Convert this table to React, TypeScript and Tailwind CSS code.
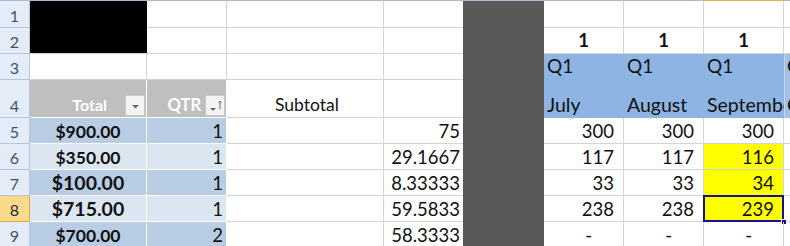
import React from 'react';

const font = { fontFamily: 'Lato, "Open Sans", sans-serif' };

function RowHead({ n, active, h }: { n: number; active?: boolean; h: string }) {
  return (
    <div
      className={`${h} w-[30px] shrink-0 flex items-end justify-center pb-[3px] border-r border-b text-[16px] ${
        active
          ? 'bg-[#f9d98c] border-[#e5a93a] text-[#2a2a2a]'
          : 'bg-[#e4ecf7] border-[#b3c6dd] text-[#3c5270]'
      }`}
    >
      {n}
    </div>
  );
}

function FilterButton({ sort }: { sort?: boolean }) {
  return (
    <div className="relative w-[20px] h-[21px] bg-[#f4f4f4] border border-[#c8c8c8] flex items-center justify-center">
      <svg width="18" height="19" viewBox="0 0 18 19">
        {sort ? (
          <>
            <path d="M4 12h6l-3 3z" fill="#6a6a6a" />
            <path d="M14 5v8M12.5 6.5L14 5l1.5 1.5" stroke="#6a6a6a" strokeWidth="1" fill="none" />
          </>
        ) : (
          <path d="M6 9h7l-3.5 3.5z" fill="#6a6a6a" />
        )}
      </svg>
    </div>
  );
}

const grid = 'border-r border-b border-[#d4d4d4]';

export default function App() {
  const rows = [
    { n: 5, total: '$900.00', big: false, band: 'bg-[#b8cce4]', qtr: '1', sub: '75', h: '300', i: '300', j: '300', jy: false },
    { n: 6, total: '$350.00', big: false, band: 'bg-[#dce6f1]', qtr: '1', sub: '29.1667', h: '117', i: '117', j: '116', jy: true },
    { n: 7, total: '$100.00', big: true, band: 'bg-[#b8cce4]', qtr: '1', sub: '8.33333', h: '33', i: '33', j: '34', jy: true },
    { n: 8, total: '$715.00', big: true, band: 'bg-[#dce6f1]', qtr: '1', sub: '59.5833', h: '238', i: '238', j: '239', jy: true },
    { n: 9, total: '$700.00', big: false, band: 'bg-[#b8cce4]', qtr: '2', sub: '58.3333', h: '-', i: '-', j: '-', jy: false },
  ];

  return (
    <div className="w-[790px] h-[246px] overflow-hidden bg-white text-[#111] text-[18.5px] leading-none" style={font}>
      {/* column header edge */}
      <div className="flex h-px">
        <div className="w-[703px] bg-[#a9bbd0]" />
        <div className="w-[81px] bg-[#e3b44c]" />
        <div className="flex-1 bg-[#a9bbd0]" />
      </div>

      {/* row 1 */}
      <div className="flex h-[27px]">
        <RowHead n={1} h="h-[27px]" />
        <div className="w-[117px] bg-black" />
        <div className={`w-[80px] ${grid}`} />
        <div className={`w-[157px] ${grid}`} />
        <div className="w-[79px] border-b border-[#d4d4d4]" />
        <div className="w-[81px] bg-[#595959]" />
        <div className={`w-[80px] ${grid}`} />
        <div className={`w-[80px] ${grid}`} />
        <div className={`w-[80px] ${grid}`} />
        <div className="flex-1 border-b border-[#d4d4d4]" />
      </div>

      {/* row 2 */}
      <div className="flex h-[26px]">
        <RowHead n={2} h="h-[26px]" />
        <div className="w-[117px] bg-black border-b border-[#d4d4d4]" />
        <div className={`w-[80px] ${grid}`} />
        <div className={`w-[157px] ${grid}`} />
        <div className="w-[79px] border-b border-[#d4d4d4]" />
        <div className="w-[81px] bg-[#595959]" />
        {['1', '1', '1'].map((v, k) => (
          <div key={k} className={`w-[80px] ${grid} flex items-end justify-center pb-[4px] font-bold`}>
            {v}
          </div>
        ))}
        <div className="flex-1 border-b border-[#d4d4d4]" />
      </div>

      {/* row 3 */}
      <div className="flex h-[26px]">
        <RowHead n={3} h="h-[26px]" />
        <div className={`w-[117px] ${grid}`} />
        <div className={`w-[80px] ${grid}`} />
        <div className={`w-[157px] ${grid}`} />
        <div className="w-[79px] border-b border-[#d4d4d4]" />
        <div className="w-[81px] bg-[#595959]" />
        {['Q1', 'Q1', 'Q1'].map((v, k) => (
          <div key={k} className="w-[80px] bg-[#8db4e2] flex items-end pl-[3px] pb-[5px] text-[19px]">
            {v}
          </div>
        ))}
        <div className="flex-1 bg-[#a3c0e6] border-l border-[#c6d6ea] overflow-hidden whitespace-nowrap flex items-end pl-[2px] pb-[5px] text-[19px]">
          Q1
        </div>
      </div>

      {/* row 4 */}
      <div className="flex h-[38px]">
        <RowHead n={4} h="h-[38px]" />
        <div className="w-[117px] bg-[#bfbfbf] border-r border-b border-white flex items-end justify-end pb-[1px] pr-[1px] gap-[18px]">
          <span className="text-white font-bold text-[16px] pb-[3px]">Total</span>
          <FilterButton />
        </div>
        <div className="w-[80px] bg-[#bfbfbf] border-r border-b border-white flex items-end justify-end pb-[1px] pr-[1px] gap-[4px]">
          <span className="text-white font-bold text-[16.5px] pb-[3px]">QTR</span>
          <FilterButton sort />
        </div>
        <div className={`w-[157px] ${grid} flex items-end pl-[48px] pb-[4px] text-[17.5px]`}>Subtotal</div>
        <div className="w-[79px] border-b border-[#d4d4d4]" />
        <div className="w-[81px] bg-[#595959]" />
        {['July', 'August', 'September'].map((v, k) => (
          <div key={k} className="w-[80px] bg-[#8db4e2] overflow-hidden whitespace-nowrap flex items-end pl-[3px] pb-[4px] text-[19.5px]">
            {v}
          </div>
        ))}
        <div className="flex-1 bg-[#a3c0e6] border-l border-[#c6d6ea] overflow-hidden whitespace-nowrap flex items-end pl-[2px] pb-[4px] text-[19.5px]">
          October
        </div>
      </div>

      {/* data rows */}
      {rows.map((r) => (
        <div key={r.n} className="flex h-[26px]">
          <RowHead n={r.n} active={r.n === 8} h="h-[26px]" />
          <div
            className={`w-[117px] ${r.band} border-r border-b border-white flex items-end justify-center pb-[3px] font-bold ${
              r.big ? 'text-[19.5px]' : 'text-[17.5px]'
            }`}
          >
            {r.total}
          </div>
          <div className={`w-[80px] ${r.band} border-r border-b border-white flex items-end justify-end pb-[3px] pr-[3px]`}>
            {r.qtr}
          </div>
          <div className={`w-[157px] ${grid}`} />
          <div className="w-[79px] border-b border-[#d4d4d4] flex items-end justify-end pb-[3px] pr-[3px]">{r.sub}</div>
          <div className="w-[81px] bg-[#595959]" />
          <div className={`w-[80px] ${grid} flex items-end justify-end pb-[3px] ${r.h === '-' ? 'pr-[31px]' : 'pr-[9px]'}`}>
            {r.h}
          </div>
          <div className={`w-[80px] ${grid} flex items-end justify-end pb-[3px] ${r.i === '-' ? 'pr-[31px]' : 'pr-[9px]'}`}>
            {r.i}
          </div>
          <div
            className={`relative w-[80px] ${grid} flex items-end justify-end pb-[3px] ${r.j === '-' ? 'pr-[31px]' : 'pr-[9px]'} ${
              r.jy ? 'bg-[#ffff00]' : ''
            }`}
          >
            {r.j}
            {r.n === 8 && (
              <>
                <div className="absolute left-[-1px] top-[-1px] right-[-1px] bottom-[-1px] border-2 border-[#14148a]" />
                <div className="absolute right-[-4px] bottom-[-4px] w-[6px] h-[6px] bg-[#14148a] border border-white" />
              </>
            )}
          </div>
          <div className="flex-1 border-b border-[#d4d4d4]" />
        </div>
      ))}
    </div>
  );
}
